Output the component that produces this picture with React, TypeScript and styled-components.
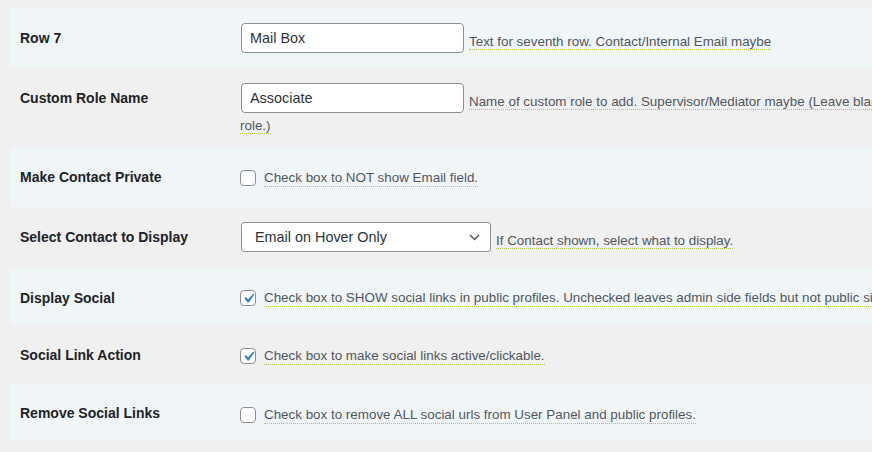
import React from "react";
import styled, { createGlobalStyle } from "styled-components";

const Global = createGlobalStyle`
  html, body { margin: 0; padding: 0; background: #f0f0f1; overflow: hidden; }
  body { font-family: "Liberation Sans", Arial, sans-serif; color: #1d2327; }
`;

const Page = styled.div`
  padding: 8px 0 0 10px;
  width: 1200px;
`;

const Table = styled.div`
  display: flex;
  flex-direction: column;
`;

const Row = styled.div<{ $striped: boolean }>`
  display: flex;
  background: ${(p) => (p.$striped ? "#f0f6f8" : "#f0f0f0")};
`;

const Label = styled.div`
  width: 200px;
  flex: none;
  padding: 21px 10px 0 10px;
  font-size: 14px;
  font-weight: 700;
  line-height: 1.3;
  color: #1d2327;
`;

const Cell = styled.div<{ $top: number; $bottom: number }>`
  flex: 1;
  padding: ${(p) => p.$top}px 10px ${(p) => p.$bottom}px;
  font-size: 13.4px;
  line-height: 1.45;
`;

const TextInput = styled.input`
  box-sizing: border-box;
  width: 223px;
  height: 30px;
  margin: 0 1px;
  padding: 0 8px;
  border: 1px solid #8c8f94;
  border-radius: 4px;
  background: #fff;
  font-family: inherit;
  font-size: 14.4px;
  color: #2c3338;
  vertical-align: baseline;
  outline: none;
`;

const SelectBox = styled.span`
  box-sizing: border-box;
  display: inline-flex;
  align-items: center;
  justify-content: space-between;
  width: 250px;
  height: 30px;
  margin: 0 1px;
  padding: 0 10px 0 13px;
  border: 1px solid #8c8f94;
  border-radius: 3px;
  background: #fff;
  font-size: 14.4px;
  color: #2c3338;
  vertical-align: baseline;
`;

const Desc = styled.span<{ $gap: number }>`
  margin-left: ${(p) => p.$gap}px;
  color: #50575e;
  border-bottom: 1px dotted #b9c14a;
  position: relative;
  top: 3px;
`;

const CheckLine = styled.div`
  display: flex;
  align-items: center;
  gap: 8px;
  padding-top: 7px;
  height: 18px;
`;

const Box = styled.span`
  box-sizing: border-box;
  width: 16px;
  height: 16px;
  flex: none;
  border: 1px solid #8c8f94;
  border-radius: 4px;
  background: #fff;
  display: flex;
  align-items: center;
  justify-content: center;
`;

const CheckDesc = styled.span`
  color: #50575e;
  border-bottom: 1px dotted #b9c14a;
  line-height: 17px;
  white-space: nowrap;
`;

const Check = ({ checked }: { checked: boolean }) => (
  <Box>
    {checked && (
      <svg width="19" height="19" viewBox="0 0 20 20" style={{ flex: "none", margin: "-2px" }}>
        <path
          d="M14.83 4.89l1.34.94-5.81 8.38H9.02L5.78 9.67l1.34-1.25 2.57 2.4z"
          fill="#3582c4"
        />
      </svg>
    )}
  </Box>
);

const Chevron = () => (
  <svg width="11" height="7" viewBox="0 0 11 7">
    <path d="M1 1l4.5 4.5L10 1" fill="none" stroke="#50575e" strokeWidth="1.5" />
  </svg>
);

export default function App() {
  return (
    <>
      <Global />
      <Page>
        <Table>
          <Row $striped>
            <Label>Row 7</Label>
            <Cell $top={15} $bottom={15}>
              <TextInput defaultValue="Mail Box" />
              <Desc $gap={4}>Text for seventh row. Contact/Internal Email maybe</Desc>
            </Cell>
          </Row>
          <Row $striped={false}>
            <Label>Custom Role Name</Label>
            <Cell $top={15} $bottom={15}>
              <TextInput defaultValue="Associate" />
              <Desc $gap={4}>
                Name of custom role to add. Supervisor/Mediator maybe (Leave blank for no custom
                <br />
                role.)
              </Desc>
            </Cell>
          </Row>
          <Row $striped>
            <Label>Make Contact Private</Label>
            <Cell $top={15} $bottom={20}>
              <CheckLine>
                <Check checked={false} />
                <CheckDesc>Check box to NOT show Email field.</CheckDesc>
              </CheckLine>
            </Cell>
          </Row>
          <Row $striped={false}>
            <Label>Select Contact to Display</Label>
            <Cell $top={15} $bottom={16}>
              <SelectBox>
                Email on Hover Only
                <Chevron />
              </SelectBox>
              <Desc $gap={4}>If Contact shown, select what to display.</Desc>
            </Cell>
          </Row>
          <Row $striped>
            <Label>Display Social</Label>
            <Cell $top={14} $bottom={18}>
              <CheckLine>
                <Check checked />
                <CheckDesc>
                  Check box to SHOW social links in public profiles. Unchecked leaves admin side fields but not public side.
                </CheckDesc>
              </CheckLine>
            </Cell>
          </Row>
          <Row $striped={false}>
            <Label>Social Link Action</Label>
            <Cell $top={15} $bottom={18}>
              <CheckLine>
                <Check checked />
                <CheckDesc>Check box to make social links active/clickable.</CheckDesc>
              </CheckLine>
            </Cell>
          </Row>
          <Row $striped>
            <Label>Remove Social Links</Label>
            <Cell $top={16} $bottom={17}>
              <CheckLine>
                <Check checked={false} />
                <CheckDesc>Check box to remove ALL social urls from User Panel and public profiles.</CheckDesc>
              </CheckLine>
            </Cell>
          </Row>
        </Table>
      </Page>
    </>
  );
}
